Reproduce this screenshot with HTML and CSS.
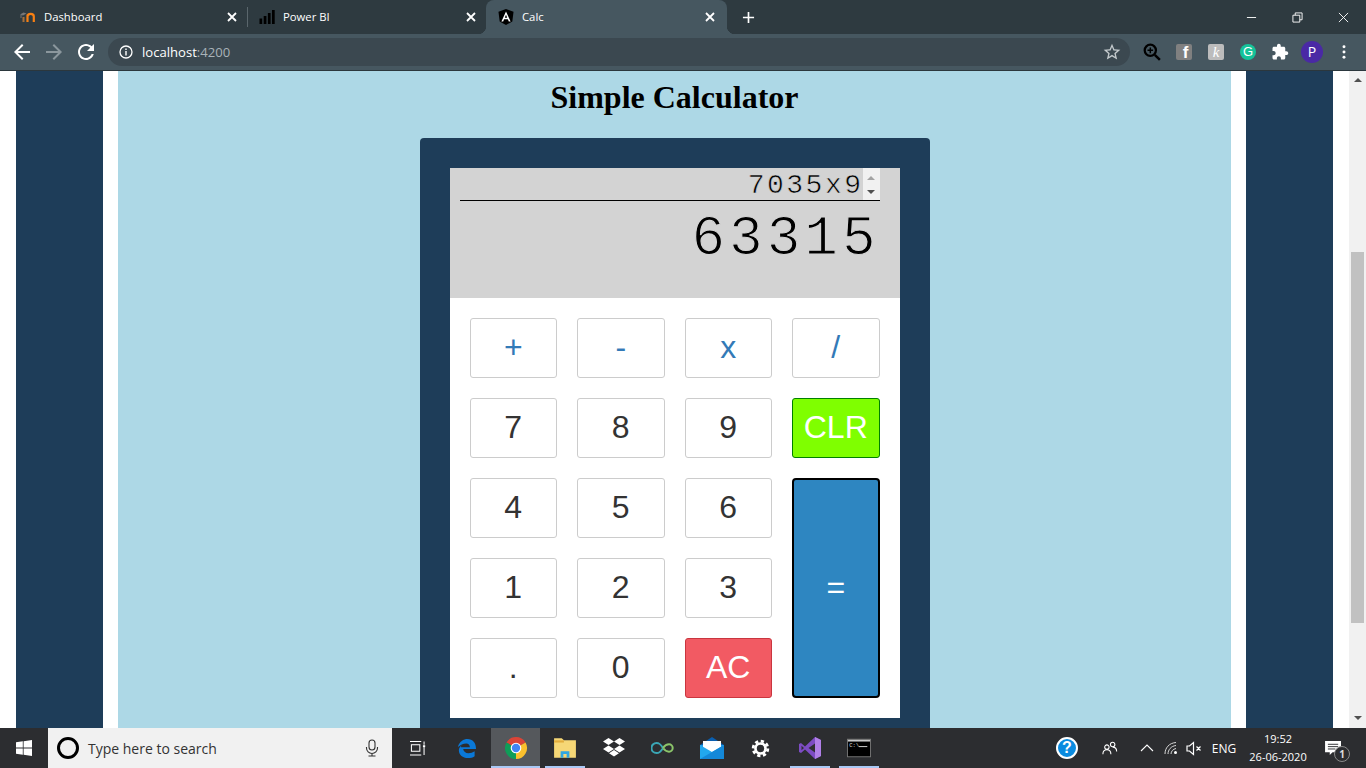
FILE: index.html
```html
<!DOCTYPE html>
<html lang="en">

<head>
    <meta charset="UTF-8">
    <meta name="viewport" content="width=device-width, initial-scale=1.0">
    <title>Calc</title>
    <link rel="stylesheet" href="styles.css">
</head>

<body>
    <header class="browser">
        <div class="tabstrip">
            <div class="tab">
                <svg class="favicon" viewBox="0 0 16 16">
                    <path d="M0 5.500 L3.500 3.500 L6.500 4.500 L3 6.500 Z" fill="#777"/>
                    <path d="M1 6 V9" stroke="#777" fill="none"/>
                    <path d="M3.500 13 V8" stroke="#a8703a" stroke-width="2" fill="none"/>
                    <path d="M7.500 13 V5.500 M7.500 7.500 A3 2.500 0 0 1 13.800 7.500 V13" stroke="#f98012" stroke-width="2.200" fill="none"/>
                </svg>
                <span class="tab-title">Dashboard</span>
                <svg class="tab-close" viewBox="0 0 10 10"><path d="M1 1 L9 9 M9 1 L1 9"/></svg>
            </div>
            <div class="tab tab-sep">
                <svg class="favicon" viewBox="0 0 16 16">
                    <path d="M.5 9.500h2.700V15H.5z M4.700 7h2.700v8H4.700z M8.900 4h2.700v11H8.900z M13 1h2.700v14H13z" fill="#000"/>
                </svg>
                <span class="tab-title">Power BI</span>
                <svg class="tab-close" viewBox="0 0 10 10"><path d="M1 1 L9 9 M9 1 L1 9"/></svg>
            </div>
            <div class="tab tab-active">
                <svg class="favicon" viewBox="0 0 16 16">
                    <path d="M8 0 L15.500 2.700 L14.300 12.500 L8 16 L1.700 12.500 L0.500 2.700 Z" fill="#000"/>
                    <path d="M8 2.500 L3.400 12.500 H5.200 L6.100 10.200 H9.900 L10.800 12.500 H12.600 Z M6.800 8.800 L8 5.800 L9.200 8.800 Z" fill="#fff"/>
                </svg>
                <span class="tab-title">Calc</span>
                <svg class="tab-close" viewBox="0 0 10 10"><path d="M1 1 L9 9 M9 1 L1 9"/></svg>
            </div>
            <svg class="new-tab" viewBox="0 0 14 14"><path d="M7 1 V13 M1 7 H13"/></svg>
            <div class="win-controls">
                <div class="win-btn"><svg viewBox="0 0 12 12"><path d="M1 6 H11"/></svg></div>
                <div class="win-btn"><svg viewBox="0 0 12 12"><path d="M1 3.500 H8.500 V11 H1 Z M3.500 3.500 V1 H11 V8.500 H8.500"/></svg></div>
                <div class="win-btn"><svg viewBox="0 0 12 12"><path d="M1 1 L11 11 M11 1 L1 11"/></svg></div>
            </div>
        </div>
        <div class="toolbar">
            <div class="tool"><svg viewBox="0 0 24 24"><path fill="#fff" d="M20 11H7.830l5.590-5.590L12 4l-8 8 8 8 1.410-1.410L7.830 13H20v-2z"/></svg></div>
            <div class="tool"><svg viewBox="0 0 24 24"><path fill="#8b979d" d="M4 11h12.170l-5.590-5.590L12 4l8 8-8 8-1.410-1.410L16.170 13H4v-2z"/></svg></div>
            <div class="tool"><svg viewBox="0 0 24 24"><path fill="#fff" d="M17.650 6.350C16.200 4.900 14.210 4 12 4c-4.420 0-7.990 3.580-7.990 8s3.570 8 7.990 8c3.730 0 6.840-2.550 7.730-6h-2.080c-.82 2.330-3.040 4-5.650 4-3.310 0-6-2.690-6-6s2.690-6 6-6c1.660 0 3.140.69 4.220 1.780L13 11h7V4l-2.350 2.350z"/></svg></div>
            <div class="omnibox">
                <svg class="info" viewBox="0 0 14 14">
                    <circle cx="7" cy="7" r="6" fill="none" stroke="#fff" stroke-width="1.300"/>
                    <path d="M7 6 V10.500 M7 3.500 V5" stroke="#fff" stroke-width="1.400"/>
                </svg>
                <span class="url">localhost<span class="url-port">:4200</span></span>
                <svg class="star" viewBox="0 0 24 24"><path fill="#c3c9cc" d="M22 9.240l-7.190-.62L12 2 9.190 8.630 2 9.240l5.460 4.730L5.820 21 12 17.270 18.180 21l-1.630-7.030L22 9.240zM12 15.400l-3.760 2.270 1-4.280-3.320-2.880 4.380-.38L12 6.100l1.710 4.040 4.380.38-3.320 2.880 1 4.280L12 15.400z"/></svg>
            </div>
            <div class="tool"><svg class="ext" viewBox="0 0 16 16">
                <circle cx="6.500" cy="6.500" r="5" fill="none" stroke="#000" stroke-width="2"/>
                <path d="M10.500 10.500 L15 15" stroke="#000" stroke-width="2.200"/>
                <path d="M4 6.500 H9 M6.500 4 V9" stroke="#000" stroke-width="1.300"/>
            </svg></div>
            <div class="tool"><span class="ext-fb">f</span></div>
            <div class="tool"><span class="ext-k">k</span></div>
            <div class="tool"><span class="ext-g">G</span></div>
            <div class="tool"><svg class="ext" viewBox="0 0 24 24"><path fill="#fff" d="M20.500 11H19V7c0-1.100-.9-2-2-2h-4V3.500C13 2.120 11.880 1 10.500 1S8 2.120 8 3.500V5H4c-1.100 0-1.990.9-1.990 2v3.800H3.500c1.490 0 2.700 1.210 2.700 2.700s-1.210 2.700-2.700 2.700H2V20c0 1.100.9 2 2 2h3.800v-1.500c0-1.490 1.210-2.700 2.700-2.700 1.490 0 2.700 1.210 2.700 2.700V22H17c1.100 0 2-.9 2-2v-4h1.500c1.380 0 2.500-1.120 2.500-2.500S21.880 11 20.500 11z"/></svg></div>
            <div class="tool"><span class="avatar">P</span></div>
            <div class="tool"><svg class="dots" viewBox="0 0 4 16"><circle cx="2" cy="2" r="1.700"/><circle cx="2" cy="8" r="1.700"/><circle cx="2" cy="14" r="1.700"/></svg></div>
        </div>
    </header>

    <main class="viewport">
        <div class="page">
            <div class="side">
                <div class="frame">
                    <div class="content">
                        <h2 class="title">Simple Calculator</h2>
                        <div class="calc">
                            <div class="screen">
                                <div class="expr">
                                    <span class="expr-text">7035x9</span>
                                    <div class="spin">
                                        <span class="spin-up"></span>
                                        <span class="spin-down"></span>
                                    </div>
                                </div>
                                <div class="result">63315</div>
                            </div>
                            <div class="keys">
                                <button class="key op">+</button>
                                <button class="key op">-</button>
                                <button class="key op">x</button>
                                <button class="key op">/</button>
                                <button class="key">7</button>
                                <button class="key">8</button>
                                <button class="key">9</button>
                                <button class="key clr">CLR</button>
                                <button class="key">4</button>
                                <button class="key">5</button>
                                <button class="key">6</button>
                                <button class="key equal">=</button>
                                <button class="key">1</button>
                                <button class="key">2</button>
                                <button class="key">3</button>
                                <button class="key">.</button>
                                <button class="key">0</button>
                                <button class="key ac">AC</button>
                            </div>
                        </div>
                    </div>
                </div>
            </div>
        </div>
        <div class="scrollbar">
            <span class="arrow-up"></span>
            <div class="thumb"></div>
            <span class="arrow-down"></span>
        </div>
    </main>

    <footer class="taskbar">
        <div class="start">
            <svg viewBox="0 0 16 16"><path fill="#fff" d="M0 2.300 L6.800 1.300 V7.600 H0 Z M7.600 1.200 L16 0 V7.600 H7.600 Z M0 8.400 H6.800 V14.700 L0 13.700 Z M7.600 8.400 H16 V16 L7.600 14.800 Z"/></svg>
        </div>
        <div class="search">
            <span class="cortana"></span>
            <span class="search-text">Type here to search</span>
            <svg class="mic" viewBox="0 0 14 18">
                <rect x="4" y="1" width="6" height="10" rx="3" fill="none" stroke="#333" stroke-width="1.100"/>
                <path d="M1.500 8 V9 A5.500 5.500 0 0 0 12.500 9 V8 M7 14.500 V17 M3.500 17 H10.500" fill="none" stroke="#333" stroke-width="1.100"/>
            </svg>
        </div>
        <div class="app">
            <svg class="taskview" viewBox="0 0 18 16"><path d="M1 .5 H13 M2.500 4 H11.500 V11 H2.500 Z M1 15 H13 M16 .5 V4 M16 6.500 V15" fill="none" stroke="#fff" stroke-width="1.100"/><rect x="14.800" y="4.500" width="2.400" height="2" fill="#fff"/></svg>
        </div>
        <div class="app">
            <svg class="edge" viewBox="0 0 22 22"><path d="M2 9.500 C3.500 3.500 8 1 12 1 C17.500 1 21 5 21 11.500 H7.500 C8 14 10 16 13 16 C15.500 16 17.500 15.300 19.500 14 V19 C17.500 20.500 15 21 12.500 21 C7 21 3 17.500 3 13 C3 11 3.800 9 6 7.500 C5.500 8.300 5.200 9 5 9.800 H14.500 C14.500 7.500 13 5.800 10.800 5.800 C7.500 5.800 4.500 7.500 2 9.500 Z" fill="#0a78d7"/></svg>
        </div>
        <div class="app app-active">
            <svg viewBox="0 0 24 24">
                <path d="M12 12 L2.470 6.500 A11 11 0 0 1 21.530 6.500 Z" fill="#db4437"/>
                <path d="M12 12 L21.530 6.500 A11 11 0 0 1 12 23 Z" fill="#fbc02d"/>
                <path d="M12 12 L12 23 A11 11 0 0 1 2.470 6.500 Z" fill="#0f9d58"/>
                <circle cx="12" cy="12" r="5.300" fill="#fff"/>
                <circle cx="12" cy="12" r="4.200" fill="#4285f4"/>
            </svg>
        </div>
        <div class="app app-open">
            <svg viewBox="0 0 22 20">
                <path d="M1 1 H8 L10 3 H21 V19 H1 Z" fill="#f6d776"/>
                <path d="M1 3 H10 V5 H1 Z" fill="#e3ae3d"/>
                <path d="M7 19 V13 H15 V19 H12.500 V15.500 H9.500 V19 Z" fill="#2fa7e2"/>
            </svg>
        </div>
        <div class="app">
            <svg viewBox="0 0 24 22">
                <path fill="#fff" d="M6.500 1 L12 4.500 L6.500 8 L1 4.500 Z M17.500 1 L23 4.500 L17.500 8 L12 4.500 Z M6.500 8.500 L12 12 L6.500 15.500 L1 12 Z M17.500 8.500 L23 12 L17.500 15.500 L12 12 Z M12 13 L17 16.300 L12 19.500 L7 16.300 Z"/>
            </svg>
        </div>
        <div class="app">
            <svg viewBox="0 0 26 14">
                <path d="M13 7 C10 2 8.500 1.500 6 1.500 A5.500 5.500 0 0 0 6 12.500 C8.500 12.500 10 12 13 7" fill="none" stroke="#3aa6b5" stroke-width="2.200"/>
                <path d="M13 7 C15.500 3.500 17.500 3 19.500 3 A4 4 0 0 1 19.500 11 C17.500 11 15.500 10.500 13 7" fill="none" stroke="#8cc56a" stroke-width="2.200"/>
            </svg>
        </div>
        <div class="app">
            <svg viewBox="0 0 24 24">
                <path d="M0 9 L12 1 L24 9 V10 H0 Z" fill="#0a5fb0"/>
                <path d="M0 9 H24 V23 H0 Z" fill="#1e9be6"/>
                <path d="M3 5 H21 V12 L12 17 L3 12 Z" fill="#fff"/>
                <path d="M0 9 L12 16 L24 9 V23 H0 Z" fill="#22a8ee"/>
                <path d="M0 23 L12 16 L24 9 V23 Z" fill="#1488d8"/>
            </svg>
        </div>
        <div class="app">
            <svg class="gear" viewBox="0 0 20 20">
                <circle cx="10" cy="10" r="5.300" fill="none" stroke="#fff" stroke-width="2.800"/>
                <circle cx="10" cy="10" r="7.700" fill="none" stroke="#fff" stroke-width="3" stroke-dasharray="3.400 2.650"/>
            </svg>
        </div>
        <div class="app app-open-split">
            <svg viewBox="0 0 24 24">
                <path d="M17 1 L23 4 V20 L17 23 L7 13.500 L3 17 L1 16 V8 L3 7 L7 10.500 Z" fill="#7d4cc4"/>
                <path d="M17 1 L23 4 V20 L17 23 Z" fill="#b180e8"/>
                <path d="M17 7.500 L10.500 12 L17 16.500 Z M3.500 9.700 V14.300 L6 12 Z" fill="#2f2f33"/>
            </svg>
        </div>
        <div class="app app-open-split">
            <svg viewBox="0 0 26 20">
                <rect x=".5" y=".5" width="25" height="19" fill="#000" stroke="#777"/>
                <rect x="1" y="1" width="24" height="2" fill="#ccc"/>
                <text x="2.500" y="9" class="cmd-text">C:\</text>
                <rect x="13" y="8" width="9" height="1" fill="#ddd"/>
            </svg>
        </div>
        <div class="tray">
            <div class="help">?</div>
            <svg class="people" viewBox="0 0 18 18"><path d="M5.500 8 m-2.500 0 a2.500 2.500 0 1 0 5 0 a2.500 2.500 0 1 0 -5 0 M1 16 C1 12.500 3 11 5.500 11 C8 11 10 12.500 10 16 M12 5 m-2.500 0 a2.500 2.500 0 1 0 5 0 a2.500 2.500 0 1 0 -5 0 M12 8 C14.500 8 16.500 9.500 16.500 13" fill="none" stroke="#fff" stroke-width="1.200"/></svg>
            <div class="tray-cell"><svg class="tray-icon" viewBox="0 0 14 8"><path d="M1 7 L7 1 L13 7" fill="none" stroke="#fff" stroke-width="1.100"/></svg></div>
            <div class="tray-cell"><svg class="tray-icon" viewBox="0 0 14 14"><path d="M1 13 C1 7 5 2 12 1.500 M4 13 C4 9 7 5 12 4.500 M7 13 C7 10.500 9 8 12 7.500" fill="none" stroke="#d8d8d8"/><circle cx="11.500" cy="11.500" r="1.500" fill="#fff"/></svg></div>
            <div class="tray-cell vol"><svg class="tray-icon" viewBox="0 0 16 14"><path d="M1 4.500 H3.500 L7.500 1 V13 L3.500 9.500 H1 Z M10.500 5 L14.500 9 M14.500 5 L10.500 9" fill="none" stroke="#fff" stroke-width="1.200"/></svg></div>
            <div class="lang">ENG</div>
            <div class="clock">
                <span>19:52</span>
                <span>26-06-2020</span>
            </div>
            <div class="notify">
                <svg viewBox="0 0 18 16"><path d="M0 0 H17 V12 H8 L5 15 V12 H0 Z" fill="#fff"/><path d="M3 3.500 H14 M3 6 H14 M3 8.500 H11" stroke="#2c2d30"/></svg>
                <span class="notify-count">1</span>
            </div>
        </div>
    </footer>
</body>

</html>
```

FILE: styles.css
```css
* {
    box-sizing: border-box;
}

html,
body {
    margin: 0;
    height: 100%;
}

body {
    height: 768px;
    display: flex;
    flex-direction: column;
    overflow: hidden;
    font-family: "Open Sans", "Noto Sans", sans-serif;
}

/* browser chrome */
.browser {
    flex: none;
    height: 71px;
    background: #465760;
    border-bottom: 1px solid #2b373d;
}

.tabstrip {
    display: flex;
    align-items: center;
    height: 34px;
    padding-left: 8px;
    background: #2e3a40;
    color: #fff;
}

.tab {
    position: relative;
    display: flex;
    align-items: center;
    width: 239px;
    height: 34px;
    padding: 0 10px 0 12px;
    font-size: 11.300px;
}

.tab-title {
    margin-bottom: 2px;
}

.tab-sep::before {
    content: "";
    position: absolute;
    left: 0;
    top: 7px;
    height: 20px;
    border-left: 1px solid #5a666c;
}

.tab-active {
    width: 241px;
    height: 34px;
    background: #465760;
    border-radius: 8px 8px 0 0;
    padding-right: 12px;
}

.tab-active::before,
.tab-active::after {
    content: "";
    position: absolute;
    bottom: 0;
    width: 8px;
    height: 8px;
}

.tab-active::before {
    left: -8px;
    background: radial-gradient(circle at 0 0, transparent 8px, #465760 8.500px);
}

.tab-active::after {
    right: -8px;
    background: radial-gradient(circle at 100% 0, transparent 8px, #465760 8.500px);
}

.favicon {
    width: 16px;
    height: 16px;
    margin-right: 8px;
    flex: none;
}

.tab-close {
    width: 10px;
    height: 10px;
    margin-left: auto;
}

.tab-close path,
.new-tab path {
    stroke: #fff;
    stroke-width: 1.800;
    fill: none;
}

.new-tab {
    width: 13px;
    height: 13px;
    margin-left: 15px;
}

.win-controls {
    display: flex;
    margin-left: auto;
}

.win-btn {
    width: 46px;
    height: 28px;
    display: flex;
    align-items: center;
    justify-content: center;
}

.win-btn svg {
    width: 11px;
    height: 11px;
}

.win-btn path {
    fill: none;
    stroke: #fff;
    stroke-width: 1;
}

.toolbar {
    display: flex;
    align-items: center;
    height: 36px;
    padding: 0 6px;
}

.tool {
    flex: none;
    width: 32px;
    height: 28px;
    display: flex;
    align-items: center;
    justify-content: center;
}

.tool svg {
    width: 24px;
    height: 24px;
}

.tool svg.ext {
    width: 18px;
    height: 18px;
}

.tool svg.dots {
    width: 4px;
    height: 14px;
    fill: #fff;
}

.omnibox {
    flex: 1;
    display: flex;
    align-items: center;
    height: 28px;
    margin: 0 6px;
    padding: 0 8px 0 11px;
    border-radius: 14px;
    background: #3b4850;
}

.info {
    width: 14px;
    height: 14px;
    margin-right: 9px;
}

.url {
    font-size: 13.100px;
    color: #fff;
}

.url-port {
    color: #a9b3b8;
}

.star {
    width: 20px;
    height: 20px;
    margin-left: auto;
}

.ext-fb,
.ext-k {
    width: 16px;
    height: 16px;
    border-radius: 2px;
    color: #fff;
    text-align: center;
}

.ext-fb {
    padding-left: 3px;
    background: #808080;
    font: bold 17px/17px "Liberation Sans", sans-serif;
}

.ext-k {
    background: #bcbcbc;
    font: italic 15px/16px "Liberation Serif", serif;
}

.ext-g {
    width: 16px;
    height: 16px;
    border-radius: 50%;
    background: #15c39a;
    color: #fff;
    text-align: center;
    font: 13px/16px "Liberation Sans", sans-serif;
}

.avatar {
    width: 22px;
    height: 22px;
    border-radius: 50%;
    background: #4a29a5;
    color: #fff;
    text-align: center;
    font-size: 14px;
    line-height: 22px;
}

/* page */
.viewport {
    flex: 1;
    display: flex;
    min-height: 0;
    overflow: hidden;
}

.page {
    flex: 1;
    padding: 0 16px;
    background: #fff;
}

.side {
    height: 100%;
    padding: 0 87px;
    background: #1e3d59;
}

.frame {
    height: 100%;
    padding: 0 15px;
    background: #fff;
}

.content {
    height: 100%;
    background: #add8e6;
    overflow: hidden;
}

.title {
    margin: 0;
    padding-top: 8px;
    height: 67px;
    text-align: center;
    font: bold 32px/36px "Liberation Serif", serif;
    color: #000;
}

.calc {
    width: 510px;
    margin: 0 auto;
    padding: 30px;
    border-radius: 4px;
    background: #1e3d59;
}

.screen {
    height: 130px;
    padding: 0 20px 0 10px;
    background: #d3d3d3;
    font-family: "Liberation Mono", monospace;
    color: #000;
}

/* stroke in the panel colour thins the heavy mono glyphs */
.expr {
    display: flex;
    justify-content: flex-end;
    height: 33px;
    border-bottom: 1px solid #000;
    font-size: 28px;
    line-height: 35px;
    letter-spacing: 2.500px;
    -webkit-text-stroke: 0.600px #d3d3d3;
}

.expr-text {
    margin-right: -1px;
}

.spin {
    flex: none;
    position: relative;
    width: 17px;
    display: flex;
    flex-direction: column;
    justify-content: space-between;
    align-items: center;
    padding: 8px 0 6px;
    background: #f1f1f1;
}

.spin-up,
.spin-down {
    border-left: 4px solid transparent;
    border-right: 4px solid transparent;
}

.spin-up {
    border-bottom: 4px solid #a3a3a3;
}

.spin-down {
    border-top: 4px solid #505050;
}

.result {
    text-align: right;
    font-size: 56px;
    line-height: 76px;
    letter-spacing: 4px;
    -webkit-text-stroke: 1.200px #d3d3d3;
}

.keys {
    display: grid;
    grid-template-columns: repeat(4, 1fr);
    grid-auto-rows: 60px;
    gap: 20px;
    padding: 20px;
    background: #fff;
}

.key {
    padding: 0 0 2px;
    border: 1px solid #ccc;
    border-radius: 3px;
    background: #fff;
    color: #333;
    font: 32px "Liberation Sans", Arial, sans-serif;
}

.op {
    color: #337ab7;
}

.clr {
    background: #7fff00;
    border-color: #008000;
    color: #fff;
}

.ac {
    background: #f25a63;
    border-color: #c9363f;
    color: #fff;
}

.equal {
    grid-row: span 3;
    background: #2e86c1;
    border: 2px solid #000;
    border-radius: 4px;
    color: #fff;
}

.scrollbar {
    flex: none;
    width: 17px;
    display: flex;
    flex-direction: column;
    align-items: center;
    background: #f1f1f1;
}

.arrow-up,
.arrow-down {
    flex: none;
    border-left: 4px solid transparent;
    border-right: 4px solid transparent;
}

.arrow-up {
    margin-top: 7px;
    border-bottom: 4px solid #505050;
}

.arrow-down {
    margin-top: 93px;
    border-top: 4px solid #505050;
}

.thumb {
    flex: none;
    width: 13px;
    height: 371px;
    margin-top: 170px;
    background: #c1c1c1;
}

/* windows taskbar */
.taskbar {
    flex: none;
    display: flex;
    height: 40px;
    background: #2c2d30;
    color: #fff;
}

.start {
    flex: none;
    width: 48px;
    display: flex;
    align-items: center;
    justify-content: center;
}

.start svg {
    width: 16px;
    height: 16px;
}

.search {
    flex: none;
    display: flex;
    align-items: center;
    width: 344px;
    margin-right: 1px;
    padding: 0 13px 0 9px;
    background: #f1f1f1;
    color: #333;
}

.cortana {
    width: 22px;
    height: 22px;
    border: 3px solid #000;
    border-radius: 50%;
}

.search-text {
    margin-left: 9px;
    font-size: 14px;
}

.mic {
    width: 14px;
    height: 18px;
    margin-left: auto;
}

.app {
    flex: none;
    position: relative;
    width: 49px;
    display: flex;
    align-items: center;
    justify-content: center;
}

.app svg {
    width: 24px;
    height: 24px;
}

.app svg.taskview {
    width: 17px;
    height: 15px;
}

.app svg.edge {
    width: 21px;
    height: 21px;
}

.app svg.gear {
    width: 19px;
    height: 19px;
}

.app-active {
    background: #55585c;
}

.app-active::after,
.app-open::after,
.app-open-split::after {
    content: "";
    position: absolute;
    bottom: 0;
    height: 2px;
    background: #a9c8f5;
}

.app-active::after {
    left: 0;
    right: 0;
}

.app-open::after,
.app-open-split::after {
    left: 5px;
    right: 4px;
}

.cmd-text {
    font: 6px "Liberation Mono", monospace;
    fill: #ddd;
}

.tray {
    display: flex;
    align-items: center;
    margin-left: auto;
    padding-right: 13px;
}

.help {
    width: 22px;
    height: 22px;
    margin: 0 7px;
    border: 2px solid #fff;
    border-radius: 50%;
    background: #0a8be0;
    color: #fff;
    text-align: center;
    font: bold 16px/18px "Liberation Sans", sans-serif;
}

.people {
    width: 16px;
    height: 16px;
    margin: 0 17px;
}

.tray-cell {
    width: 24px;
    display: flex;
    justify-content: center;
}

.tray-icon {
    width: 14px;
    height: 14px;
}

.vol {
    width: 22px;
}

.vol .tray-icon {
    width: 16px;
    height: 15px;
}

.lang {
    width: 38px;
    text-align: center;
    font-size: 12px;
}

.clock {
    width: 70px;
    display: flex;
    flex-direction: column;
    align-items: center;
    gap: 2px;
    font-size: 11px;
    line-height: 16px;
}

.notify {
    position: relative;
    width: 40px;
    display: flex;
    justify-content: center;
}

.notify svg {
    width: 17px;
    height: 15px;
}

.notify-count {
    position: absolute;
    left: 21px;
    top: 5px;
    width: 16px;
    height: 16px;
    border: 1px solid #8a8a8a;
    border-radius: 50%;
    background: #2c2d30;
    color: #ddd;
    text-align: center;
    font-size: 10px;
    font-weight: bold;
    line-height: 14px;
}
```
